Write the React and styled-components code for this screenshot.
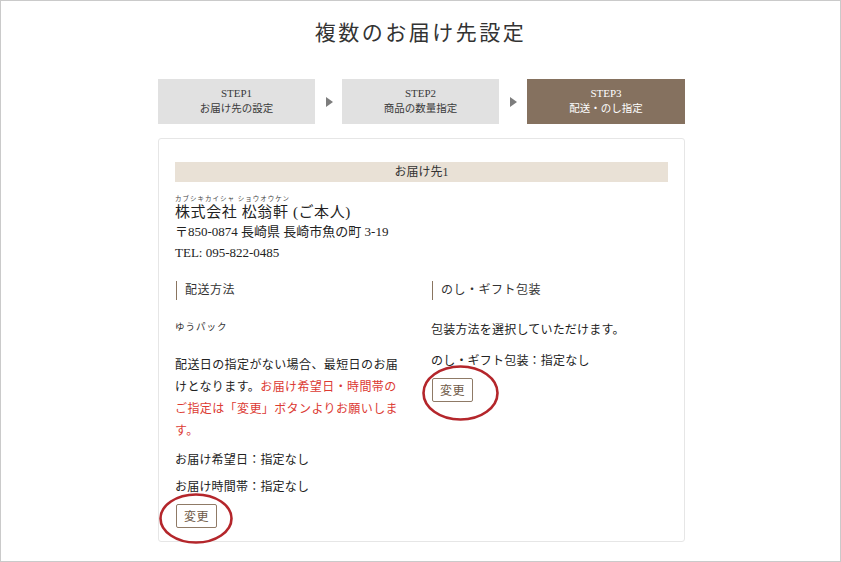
import React from 'react';
import styled, { createGlobalStyle } from 'styled-components';

const GlobalStyle = createGlobalStyle`
  body {
    margin: 0;
    background: #fff;
    font-family: "Liberation Serif", "Noto Sans CJK JP", serif;
    color: #333;
  }
`;

const Frame = styled.div`
  width: 841px;
  height: 562px;
  box-sizing: border-box;
  border: 1px solid #cacaca;
  overflow: hidden;
`;

const Title = styled.h1`
  margin: 17px 0 0;
  font-size: 21px;
  line-height: 30px;
  font-weight: 400;
  letter-spacing: 2.5px;
  text-align: center;
  color: #333;
`;

const Steps = styled.div`
  display: grid;
  grid-template-columns: 157px 27px 157px 28px 158px;
  width: 527px;
  margin: 31px 0 0 157px;
`;

const Step = styled.div`
  height: 45px;
  box-sizing: border-box;
  padding-top: 6px;
  text-align: center;
  background: ${({ active }) => (active ? '#85715f' : '#e1e1e1')};
  color: ${({ active }) => (active ? '#fff' : '#3a3a3a')};
`;

const StepNo = styled.div`
  font-size: 11px;
  line-height: 16px;
`;

const StepLabel = styled.div`
  font-size: 10.5px;
  line-height: 16px;
`;

const Arrow = styled.div`
  display: flex;
  align-items: center;
  justify-content: center;

  &::before {
    content: '';
    border-left: 7px solid #7d7d7d;
    border-top: 5px solid transparent;
    border-bottom: 5px solid transparent;
    margin-left: 1px;
  }
`;

const Card = styled.div`
  width: 527px;
  margin: 14px 0 0 157px;
  box-sizing: border-box;
  border: 1px solid #e6e6e6;
  border-radius: 3px;
  padding: 23px 16px 13px 16px;
`;

const CardHeader = styled.div`
  height: 20px;
  line-height: 20px;
  background: #e9e1d6;
  text-align: center;
  font-size: 12px;
  color: #333;
`;

const Kana = styled.div`
  margin-top: 12px;
  font-size: 6.5px;
  line-height: 9px;
  letter-spacing: 1px;
  color: #444;
`;

const Name = styled.div`
  font-size: 15px;
  line-height: 18px;
  letter-spacing: 0.6px;
  color: #222;
`;

const InfoLine = styled.div`
  font-size: 13px;
  line-height: 21px;
  color: #222;
`;

const Columns = styled.div`
  display: grid;
  grid-template-columns: 256px 1fr;
  margin-top: 18px;
`;

const Column = styled.div`
  display: flex;
  flex-direction: column;
  align-items: flex-start;
`;

const SectionHead = styled.div`
  height: 19px;
  line-height: 19px;
  border-left: 1px solid #8a7560;
  padding-left: 8px;
  margin-left: 1px;
  font-size: 12px;
  letter-spacing: 0.5px;
  color: #333;
`;

const Carrier = styled.div`
  margin-top: 20px;
  font-size: 9.5px;
  line-height: 14px;
  letter-spacing: 1px;
  color: #333;
`;

const Text = styled.p`
  margin: ${({ gap }) => gap || 0}px 0 0;
  max-width: ${({ wide }) => (wide ? '228px' : 'none')};
  font-size: 12px;
  line-height: 22px;
  letter-spacing: ${({ wide }) => (wide ? '0.4px' : '0.2px')};
  color: #222;
`;

const Red = styled.span`
  color: #dc3a33;
`;

const Marked = styled.div`
  position: relative;
  margin-top: ${({ gap }) => gap}px;
  margin-left: 1px;
`;

const ChangeButton = styled.button`
  display: block;
  height: 24px;
  padding: 0 7px;
  background: #fff;
  border: 1px solid #8f7a66;
  border-radius: 2px;
  font-family: inherit;
  font-size: 12px;
  color: #6f5a47;
  letter-spacing: 0.5px;
`;

const Circle = styled.svg`
  position: absolute;
  left: ${({ x }) => x}px;
  top: ${({ y }) => y}px;
  pointer-events: none;
  overflow: visible;
`;

function RedCircle({ x, y, w, h }) {
  return (
    <Circle x={x} y={y} width={w} height={h} viewBox={`0 0 ${w} ${h}`}>
      <ellipse
        cx={w / 2}
        cy={h / 2}
        rx={w / 2 - 1.5}
        ry={h / 2 - 1.5}
        fill="none"
        stroke="#b4262b"
        strokeWidth="2.6"
      />
    </Circle>
  );
}

const steps = [
  { no: 'STEP1', label: 'お届け先の設定' },
  { no: 'STEP2', label: '商品の数量指定' },
  { no: 'STEP3', label: '配送・のし指定', active: true },
];

export default function App() {
  return (
    <Frame>
      <GlobalStyle />
      <Title>複数のお届け先設定</Title>
      <Steps>
        {steps.map((s, i) => (
          <React.Fragment key={s.no}>
            {i > 0 && <Arrow />}
            <Step active={s.active}>
              <StepNo>{s.no}</StepNo>
              <StepLabel>{s.label}</StepLabel>
            </Step>
          </React.Fragment>
        ))}
      </Steps>
      <Card>
        <CardHeader>お届け先1</CardHeader>
        <Kana>カブシキカイシャ ショウオウケン</Kana>
        <Name>株式会社 松翁軒 (ご本人)</Name>
        <InfoLine>〒850-0874 長崎県 長崎市魚の町 3-19</InfoLine>
        <InfoLine>TEL: 095-822-0485</InfoLine>
        <Columns>
          <Column>
            <SectionHead>配送方法</SectionHead>
            <Carrier>ゆうパック</Carrier>
            <Text gap={20} wide>
              配送日の指定がない場合、最短日のお届けとなります。
              <Red>お届け希望日・時間帯のご指定は「変更」ボタンよりお願いします。</Red>
            </Text>
            <Text gap={7}>お届け希望日：指定なし</Text>
            <Text gap={5}>お届け時間帯：指定なし</Text>
            <Marked gap={6}>
              <ChangeButton>変更</ChangeButton>
              <RedCircle x={-17} y={-11} w={74} h={51} />
            </Marked>
          </Column>
          <Column>
            <SectionHead>のし・ギフト包装</SectionHead>
            <Text gap={19}>包装方法を選択していただけます。</Text>
            <Text gap={9}>のし・ギフト包装：指定なし</Text>
            <Marked gap={6}>
              <ChangeButton>変更</ChangeButton>
              <RedCircle x={-10} y={-13} w={77} h={56} />
            </Marked>
          </Column>
        </Columns>
      </Card>
    </Frame>
  );
}
